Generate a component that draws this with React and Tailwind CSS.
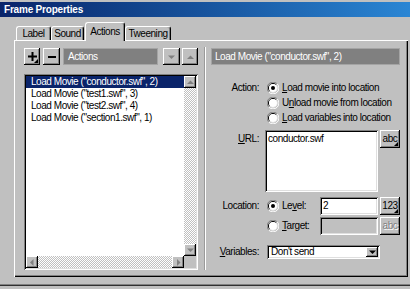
import React from "react";

const raised = "shadow-[inset_-1px_-1px_0_#000,inset_1px_1px_0_#fff,inset_-2px_-2px_0_#808080]";
const sunken = "shadow-[inset_1px_1px_0_#808080,inset_-1px_-1px_0_#fff,inset_2px_2px_0_#000,inset_-2px_-2px_0_#dfdfdf]";
const dither = "bg-[repeating-conic-gradient(#c0c0c0_0_25%,#fff_0_50%)] [background-size:2px_2px]";

const items = [
  'Load Movie ("conductor.swf", 2)',
  'Load Movie ("test1.swf", 3)',
  'Load Movie ("test2.swf", 4)',
  'Load Movie ("section1.swf", 1)',
];

export default function App() {
  return (
    <div className="w-[410px] h-[289px] overflow-hidden bg-[#c0c0c0] flex flex-col font-['Liberation_Sans',Arial,sans-serif] text-[10px] leading-[12px] tracking-[-0.45px] text-black">
      {/* title bar */}
      <div className="mt-[2px] h-[15px] shrink-0 bg-linear-to-r from-[#0a246a] to-[#2b86d4] flex items-center pl-[4px] text-white font-bold tracking-[-0.2px]">
        Frame Properties
      </div>

      {/* tabs */}
      <div className="h-[23px] shrink-0 flex items-end pl-[16px]">
        <Tab w="w-[35px]">Label</Tab>
        <Tab w="w-[33px]">Sound</Tab>
        <div className="relative z-10 ml-[1px] mb-[-1px] w-[40px] h-[19px] bg-[#c0c0c0] border-t border-l border-white border-r border-r-black rounded-t-[3px] shadow-[inset_-1px_0_0_#808080] flex items-center justify-center pb-[1px]">
          Actions
        </div>
        <Tab w="w-[46px]">Tweening</Tab>
      </div>

      {/* tab panel */}
      <div className="ml-[14px] w-[394px] h-[237px] shrink-0 pt-[8px] pl-[10px] pb-[7px] flex shadow-[inset_1px_1px_0_#fff,inset_-1px_-1px_0_#000,inset_-2px_-2px_0_#808080]">
        {/* left: actions list */}
        <div className="w-[174px] flex flex-col">
          <div className="h-[17px] flex">
            <div className={`relative w-[16px] flex items-center justify-center ${raised}`}>
              <svg width="9" height="9" viewBox="0 0 9 9">
                <rect x="3.5" y="0" width="2" height="9" fill="#000" />
                <rect x="0" y="3.5" width="9" height="2" fill="#000" />
              </svg>
              <Corner />
            </div>
            <div className={`ml-[3px] w-[17px] flex items-center justify-center ${raised}`}>
              <svg width="8" height="2" viewBox="0 0 8 2">
                <rect width="8" height="2" fill="#000" />
              </svg>
            </div>
            <div className="ml-[3px] w-[95px] bg-[#808080] border border-[#a4a4a4] text-white pl-[4px] flex items-center">
              Actions
            </div>
            <div className={`ml-[5px] w-[17px] flex items-center justify-center ${raised}`}>
              <Arrow dir="down" color="#808080" />
            </div>
            <div className={`ml-[2px] w-[16px] flex items-center justify-center ${raised}`}>
              <Arrow dir="up" color="#808080" />
            </div>
          </div>

          <div className={`mt-[9px] h-[196px] p-[2px] bg-white flex flex-col ${sunken}`}>
            <div className="flex flex-1 min-h-0">
              <div className="flex-1">
                {items.map((t, i) => (
                  <div
                    key={t}
                    className={`h-[12px] pl-[5px] whitespace-nowrap ${i === 0 ? "bg-[#0a246a] text-white" : ""}`}
                  >
                    {t}
                  </div>
                ))}
              </div>
              <div className="w-[12px] flex flex-col">
                <ScrollBtn dir="up" />
                <div className={`flex-1 ${dither}`} />
                <ScrollBtn dir="down" />
              </div>
            </div>
            <div className="h-[12px] flex">
              <ScrollBtn dir="left" />
              <div className={`flex-1 ${dither}`} />
              <ScrollBtn dir="right" />
              <div className="w-[12px] bg-[#c0c0c0]" />
            </div>
          </div>
        </div>

        {/* divider */}
        <div className="ml-[6px] mt-[-1px] w-[2px] border-l border-[#9a9a9a] bg-white" />

        {/* right: action parameters */}
        <div className="ml-[5px] w-[189px] flex flex-col">
          <div className="h-[17px] bg-[#808080] border border-[#a4a4a4] text-white pl-[3px] flex items-center whitespace-nowrap">
            Load Movie ("conductor.swf", 2)
          </div>

          <div className="mt-[15px] flex">
            <div className="w-[48px] text-right leading-[15px]">Action:</div>
            <div className="ml-[8px] flex flex-col">
              <RadioRow checked><u>L</u>oad movie into location</RadioRow>
              <RadioRow>U<u>n</u>load movie from location</RadioRow>
              <RadioRow><u>L</u>oad variables into location</RadioRow>
            </div>
          </div>

          <div className="mt-[5px] flex items-start">
            <div className="w-[48px] text-right pt-[3px]">
              <u>U</u>RL:
            </div>
            <div className={`ml-[6px] w-[113px] h-[62px] bg-white pt-[3px] pl-[3px] ${sunken}`}>conductor.swf</div>
            <Btn corner>abc</Btn>
          </div>

          <div className="mt-[5px] flex">
            <div className="w-[48px] text-right leading-[18px]">Location:</div>
            <div className="ml-[8px] flex flex-col gap-[2px]">
              <div className="h-[18px] flex items-center">
                <div className="w-[53px] flex items-center">
                  <Radio checked />
                  <span className="ml-[3px]">
                    Le<u>v</u>el:
                  </span>
                </div>
                <div className={`w-[58px] h-[18px] bg-white pt-[3px] pl-[3px] ${sunken}`}>2</div>
                <Btn corner>123</Btn>
              </div>
              <div className="h-[18px] flex items-center">
                <div className="w-[53px] flex items-center">
                  <Radio />
                  <span className="ml-[3px]">
                    <u>T</u>arget:
                  </span>
                </div>
                <div className={`w-[58px] h-[18px] bg-[#c0c0c0] ${sunken}`} />
                <Btn disabled>abc</Btn>
              </div>
            </div>
          </div>

          <div className="mt-[10px] flex items-center">
            <div className="w-[48px] text-right">
              <u>V</u>ariables:
            </div>
            <div className={`ml-[8px] w-[113px] h-[14px] bg-white p-[2px] pl-[4px] flex items-center ${sunken}`}>
              <span className="flex-1">Don't send</span>
              <div className={`w-[12px] h-[10px] bg-[#c0c0c0] flex items-center justify-center ${raised}`}>
                <Arrow dir="down" color="#000" />
              </div>
            </div>
          </div>
        </div>
      </div>

      {/* bottom edge of dialog area */}
      <div className="mt-[7px] h-[1px] shrink-0 bg-[#808080]" />
      <div className="h-[1px] shrink-0 bg-[#303030]" />
    </div>
  );
}

function Tab({ w, children }) {
  return (
    <div
      className={`${w} h-[14px] border-t border-l border-white border-r border-r-black rounded-t-[3px] shadow-[inset_-1px_0_0_#808080] flex items-center justify-center`}
    >
      {children}
    </div>
  );
}

function Radio({ checked = false }) {
  return (
    <svg width="12" height="12" viewBox="0 0 12 12" className="shrink-0">
      <path d="M10.2 1.8 A5.9 5.9 0 0 0 1.8 10.2" stroke="#808080" fill="none" />
      <path d="M1.8 10.2 A5.9 5.9 0 0 0 10.2 1.8" stroke="#fff" fill="none" />
      <path d="M9.2 2.8 A4.5 4.5 0 0 0 2.8 9.2" stroke="#000" fill="none" />
      <path d="M2.8 9.2 A4.5 4.5 0 0 0 9.2 2.8" stroke="#dfdfdf" fill="none" />
      <circle cx="6" cy="6" r="4" fill="#fff" />
      {checked && <circle cx="6" cy="6" r="2" fill="#000" />}
    </svg>
  );
}

function RadioRow({ checked, children }) {
  return (
    <div className="h-[15px] flex items-center">
      <Radio checked={checked} />
      <span className="ml-[3px] whitespace-nowrap">{children}</span>
    </div>
  );
}

function Corner() {
  return (
    <svg width="4" height="4" viewBox="0 0 4 4" className="absolute right-[2px] bottom-[2px]">
      <path d="M4 0 L4 4 L0 4 Z" fill="#000" />
    </svg>
  );
}

function Btn({ children, corner = false, disabled = false }) {
  return (
    <div
      className={`relative ml-[2px] w-[20px] h-[18px] shrink-0 flex items-center justify-center pb-[1px] ${raised} ${
        disabled ? "text-[#808080] [text-shadow:1px_1px_0_#fff]" : ""
      }`}
    >
      {children}
      {corner && <Corner />}
    </div>
  );
}

function Arrow({ dir, color }) {
  const d = {
    up: "M0 5 L3.5 1.5 L7 5 Z",
    down: "M0 1.5 L7 1.5 L3.5 5 Z",
    left: "M4.5 0 L4.5 7 L1 3.5 Z",
    right: "M2 0 L2 7 L5.5 3.5 Z",
  }[dir];
  const vertical = dir === "up" || dir === "down";
  return (
    <svg width={vertical ? 7 : 6} height={vertical ? 6 : 7} viewBox={vertical ? "0 0 7 6" : "0 0 6 7"}>
      <path d={d} fill={color} />
    </svg>
  );
}

function ScrollBtn({ dir }) {
  return (
    <div className={`w-[12px] h-[12px] shrink-0 bg-[#c0c0c0] flex items-center justify-center ${raised}`}>
      <Arrow dir={dir} color="#808080" />
    </div>
  );
}
